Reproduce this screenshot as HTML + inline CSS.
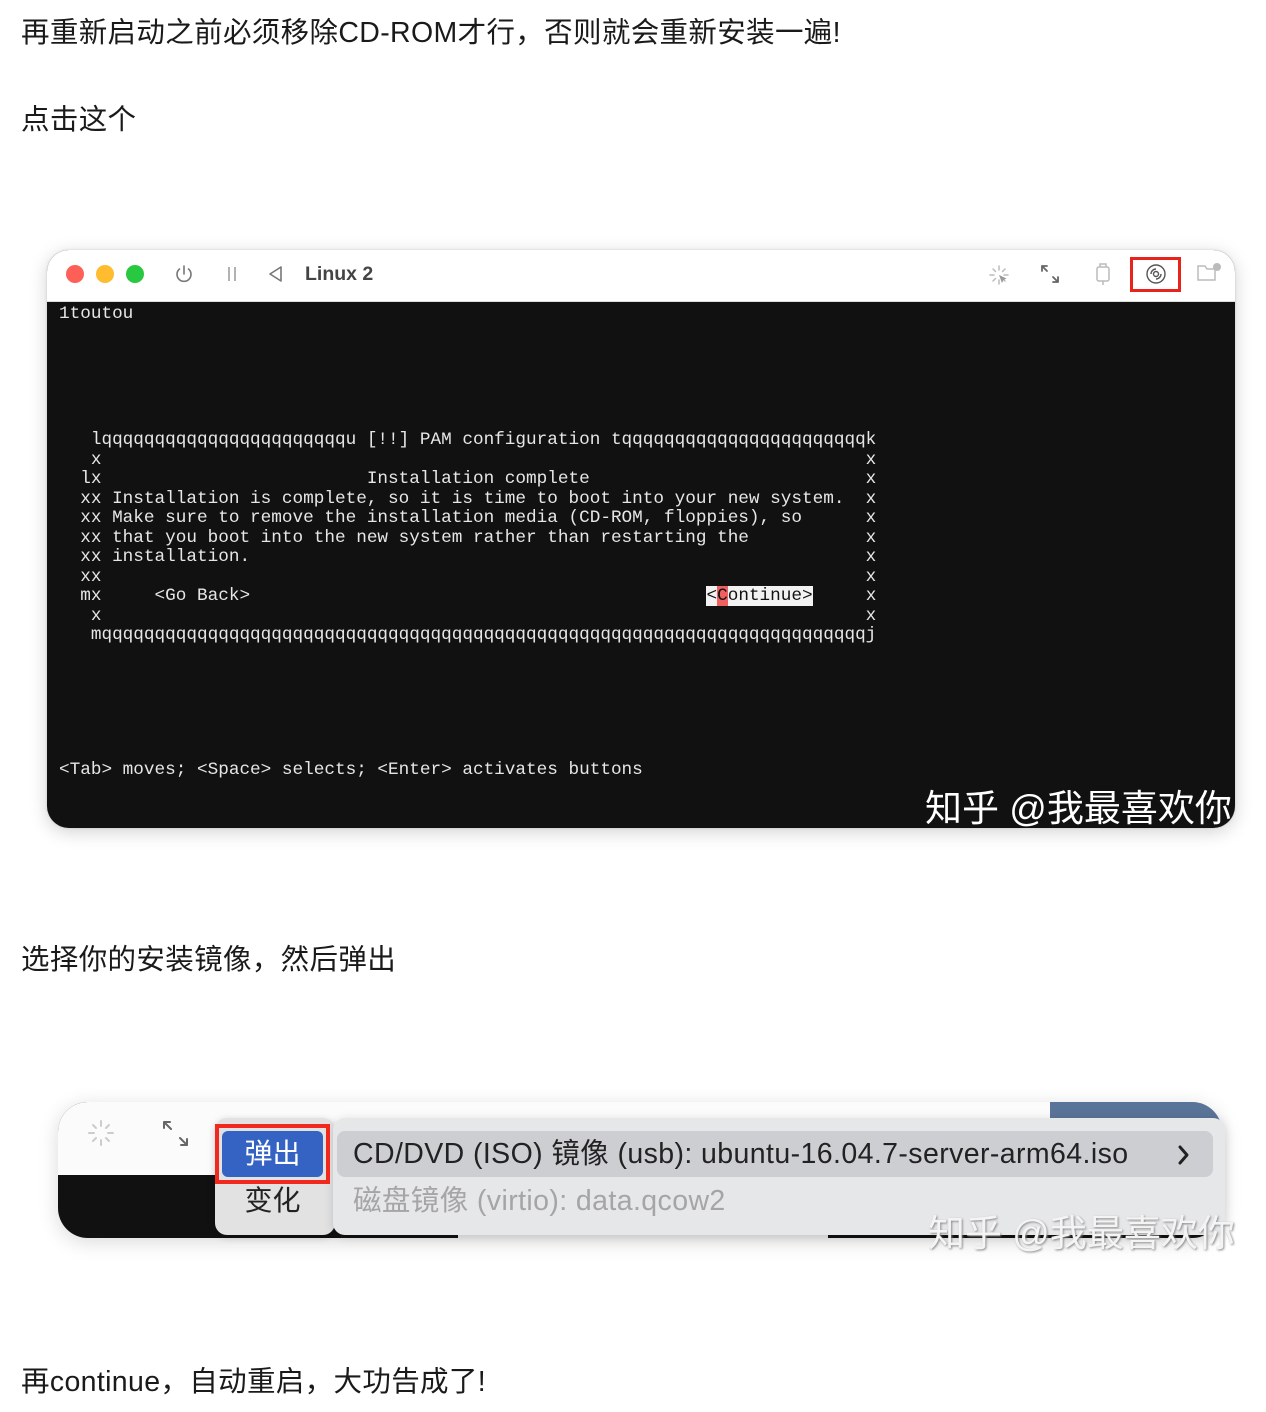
<!DOCTYPE html>
<html><head><meta charset="utf-8">
<style>
*{margin:0;padding:0;box-sizing:border-box}
html,body{width:1266px;height:1412px;background:#fff;overflow:hidden}
body{position:relative;font-family:"Liberation Sans","Noto Sans CJK SC",sans-serif;color:#1a1a1a}
.p{position:absolute;left:21px;font-size:28.5px;letter-spacing:0.35px;line-height:36px;white-space:nowrap}
.win{position:absolute;left:47px;top:250px;width:1188px;height:578px;border-radius:22px;overflow:hidden;background:#111;box-shadow:0 4px 18px rgba(0,0,0,.18),0 0 2px rgba(0,0,0,.15)}
.bar{position:absolute;left:0;top:0;width:100%;height:52px;background:#fff;border-bottom:1px solid #ddd}
.dot{position:absolute;top:15px;width:18px;height:18px;border-radius:50%}
.term{position:absolute;left:12px;font-family:"Liberation Mono",monospace;font-size:17.7px;line-height:19.5px;color:#e6e6e6;white-space:pre}
.hl{background:#f2f2f2;color:#111}
.hc{background:#f06060;color:#111}
.wm{position:absolute;font-size:37px;color:#fff;white-space:nowrap;font-family:"Liberation Sans","Noto Sans CJK SC",sans-serif}
</style></head><body>
<div class="p" style="top:15px">再重新启动之前必须移除CD-ROM才行，否则就会重新安装一遍!</div>
<div class="p" style="top:102px">点击这个</div>

<div class="win">
 <div class="bar">
  <div class="dot" style="left:19px;background:#fe5f57"></div>
  <div class="dot" style="left:49px;background:#febc2e"></div>
  <div class="dot" style="left:79px;background:#28c840"></div>
  <svg style="position:absolute;left:126px;top:13px" width="22" height="22" viewBox="0 0 22 22" fill="none" stroke="#777" stroke-width="1.6" stroke-linecap="round"><path d="M11 3v8"/><path d="M6.5 6a7 7 0 1 0 9 0"/></svg>
  <svg style="position:absolute;left:178px;top:14px" width="14" height="20" fill="none" stroke="#999" stroke-width="1.5"><path d="M4 3v14M10 3v14"/></svg>
  <svg style="position:absolute;left:220px;top:14px" width="18" height="20" fill="none" stroke="#777" stroke-width="1.6" stroke-linejoin="round"><path d="M14 3v14L3 10z"/></svg>
  <div style="position:absolute;left:258px;top:13px;font-size:19.5px;font-weight:bold;color:#444">Linux 2</div>
  <svg style="position:absolute;left:940px;top:13px" width="24" height="24" fill="none" stroke="#bbb" stroke-width="1.5" stroke-linecap="round"><path d="M12 3v4M12 17v4M3 12h4M17 12h4M6 6l2.5 2.5M15.5 15.5L18 18M6 18l2.5-2.5M15.5 8.5L18 6"/><path d="M12 12l3 8 1.5-3 3-1.5z" fill="#999" stroke="none"/></svg>
  <svg style="position:absolute;left:991px;top:12px" width="24" height="24" fill="none" stroke="#666" stroke-width="1.8" stroke-linecap="round"><path d="M4 4l5 5M4 4v5M4 4h5M20 20l-5-5M20 20v-5M20 20h-5"/></svg>
  <svg style="position:absolute;left:1046px;top:12px" width="20" height="26" fill="none" stroke="#bbb" stroke-width="1.5"><rect x="4" y="5" width="12" height="14" rx="2"/><path d="M10 19v4M7 5V2h6v3"/></svg>
  <div style="position:absolute;left:1083px;top:7px;width:51px;height:35px;border:3px solid #e8231b"></div>
  <svg style="position:absolute;left:1097px;top:12px" width="24" height="24" fill="none" stroke="#555" stroke-width="1.4"><circle cx="12" cy="12" r="9"/><circle cx="12" cy="12" r="2.5"/><path d="M7 12a5 5 0 0 1 5-5M17 12a5 5 0 0 1-5 5"/></svg>
  <svg style="position:absolute;left:1148px;top:11px" width="28" height="24" fill="none" stroke="#bbb" stroke-width="1.5"><path d="M3 5h7l2 3h8v11H3z"/><circle cx="22" cy="6" r="4" fill="#bbb" stroke="none"/></svg>
 </div>
 <div class="term" style="top:55px">1toutou</div>
 <div class="term" style="top:181px">   lqqqqqqqqqqqqqqqqqqqqqqqu [!!] PAM configuration tqqqqqqqqqqqqqqqqqqqqqqqk
   x                                                                        x
  lx                         Installation complete                          x
  xx Installation is complete, so it is time to boot into your new system.  x
  xx Make sure to remove the installation media (CD-ROM, floppies), so      x
  xx that you boot into the new system rather than restarting the           x
  xx installation.                                                          x
  xx                                                                        x
  mx     &lt;Go Back&gt;                                           <span class="hl">&lt;<span class="hc">C</span>ontinue&gt;</span>     x
   x                                                                        x
   mqqqqqqqqqqqqqqqqqqqqqqqqqqqqqqqqqqqqqqqqqqqqqqqqqqqqqqqqqqqqqqqqqqqqqqqqj</div>
 <div class="term" style="top:511px">&lt;Tab&gt; moves; &lt;Space&gt; selects; &lt;Enter&gt; activates buttons</div>
 <div class="wm" style="left:878px;top:528px">知乎 @我最喜欢你</div>
</div>

<div class="p" style="top:942px">选择你的安装镜像，然后弹出</div>

<div style="position:absolute;left:58px;top:1102px;width:1164px;height:136px;border-radius:30px;overflow:hidden;background:#111;box-shadow:0 4px 20px rgba(0,0,0,.15)">
 <div style="position:absolute;left:0;top:0;width:100%;height:73px;background:#fbfbfb"></div>
 <div style="position:absolute;left:992px;top:0;width:172px;height:40px;background:#5a7398"></div>
 <div style="position:absolute;left:400px;top:118px;width:370px;height:18px;background:#e6e6e6"></div>
 <svg style="position:absolute;left:28px;top:16px" width="30" height="30" fill="none" stroke="#ccc" stroke-width="2" stroke-linecap="round"><path d="M15 3v5M15 22v5M3 15h5M22 15h5M7 7l3 3M20 20l3 3M7 23l3-3M20 10l3-3"/></svg>
 <svg style="position:absolute;left:102px;top:16px" width="30" height="30" fill="none" stroke="#666" stroke-width="2" stroke-linecap="round"><path d="M4 4l7 7M4 4v6M4 4h6M27 27l-7-7M27 27v-6M27 27h-6"/></svg>
</div>
<div style="position:absolute;left:215px;top:1118px;width:120px;height:117px;background:#e2e2e3;border-radius:12px;box-shadow:0 2px 8px rgba(0,0,0,.2)"></div>
<div style="position:absolute;left:333px;top:1118px;width:892px;height:117px;background:#e6e7e9;border-radius:12px;box-shadow:0 2px 10px rgba(0,0,0,.15)"></div>
<div style="position:absolute;left:337px;top:1131px;width:876px;height:46px;background:#cdced2;border-radius:8px"></div>
<div style="position:absolute;left:215px;top:1124px;width:115px;height:60px;border:4px solid #f0281e"></div>
<div style="position:absolute;left:222px;top:1131px;width:101px;height:46px;background:#3463c4;border-radius:6px;color:#fff;font-size:28px;text-align:center;line-height:46px">弹出</div>
<div style="position:absolute;left:222px;top:1180px;width:101px;font-size:28px;text-align:center;line-height:42px;color:#222">变化</div>
<div style="position:absolute;left:353px;top:1136px;font-size:28.5px;letter-spacing:0.4px;line-height:36px;color:#222;white-space:nowrap">CD/DVD (ISO) 镜像 (usb): ubuntu-16.04.7-server-arm64.iso</div>
<svg style="position:absolute;left:1176px;top:1144px" width="16" height="22" fill="none" stroke="#222" stroke-width="3" stroke-linecap="round" stroke-linejoin="round"><path d="M4 3l7 8-7 8"/></svg>
<div style="position:absolute;left:353px;top:1183px;font-size:28.5px;letter-spacing:0.4px;line-height:36px;color:#a5a5a8;white-space:nowrap">磁盘镜像 (virtio): data.qcow2</div>
<div class="wm" style="left:928px;top:1203px;color:#f4f4f4;text-shadow:1px 1px 2px #888">知乎 @我最喜欢你</div>

<div class="p" style="top:1364px">再continue，自动重启，大功告成了!</div>
</body></html>
